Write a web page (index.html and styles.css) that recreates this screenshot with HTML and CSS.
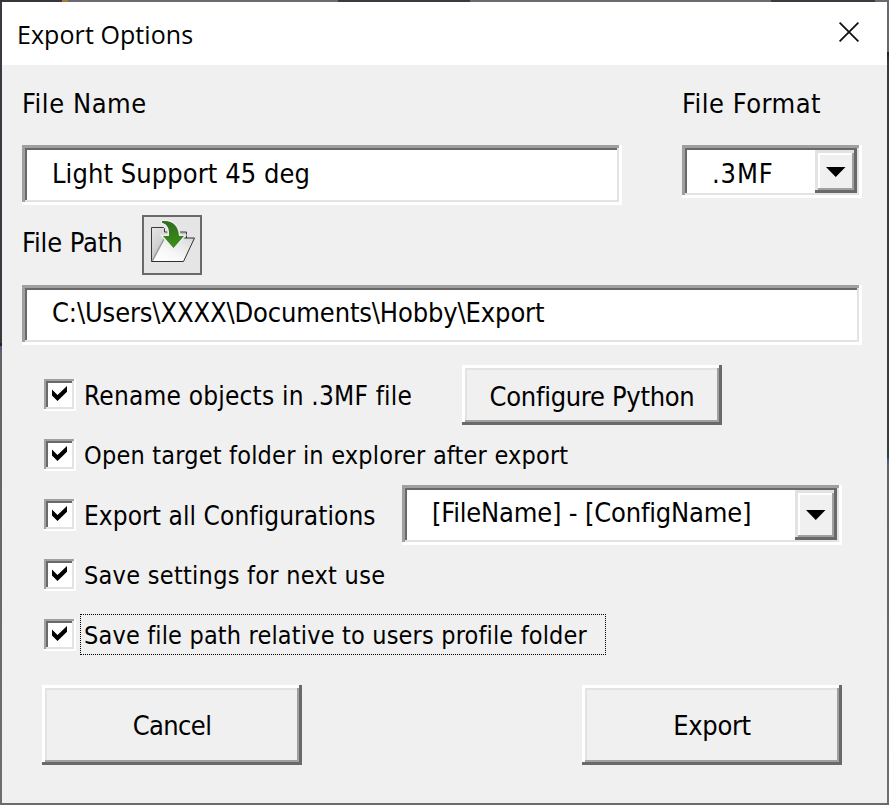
FILE: index.html
```html
<!DOCTYPE html>
<html lang="en">
<head>
<meta charset="utf-8">
<title>Export Options</title>
<link rel="stylesheet" href="styles.css">
</head>
<body>
<svg class="defs" width="0" height="0" aria-hidden="true">
  <symbol id="check" viewBox="0 0 32 32"><path d="M8 10.500 L13.500 16 L23 7 V12.700 L13.500 22 L8 16.500 Z"/></symbol>
  <symbol id="arrow" viewBox="0 0 20 10"><path d="M0 0 H19.5 L9.75 10 Z"/></symbol>
</svg>
<div class="edge edge-top"></div>
<div class="middle">
  <div class="edge edge-left"></div>
  <main class="dialog">
    <header class="titlebar">
      <h1 class="title">Export Options</h1>
      <svg class="close" width="20" height="20" viewBox="0 0 20 20"><path d="M.6 .6 L19.4 19.4 M19.4 .6 L.6 19.4" stroke="#111" stroke-width="1.8" fill="none"/></svg>
    </header>
    <div class="content">
      <div class="names">
        <section class="field name-field">
          <label class="label name-label">File Name</label>
          <div class="sunken input"><span class="value-name">Light Support 45 deg</span></div>
        </section>
        <section class="field format-field">
          <label class="label format-label">File Format</label>
          <div class="sunken select select-format"><span class="value-format">.3MF</span><button class="raised drop"><svg width="20" height="10"><use href="#arrow"/></svg></button></div>
        </section>
      </div>
      <div class="path-row">
        <label class="path-label">File Path</label>
        <button class="browse" aria-label="Browse">
          <svg width="56" height="56" viewBox="0 0 56 56">
            <defs>
              <linearGradient id="back" x1="0" y1="0" x2="1" y2="1"><stop offset="0" stop-color="#e6e6e6"/><stop offset="1" stop-color="#a9a9a9"/></linearGradient>
              <linearGradient id="front" x1="0" y1="1" x2="1" y2="0"><stop offset="0" stop-color="#fff"/><stop offset=".4" stop-color="#f8f8f8"/><stop offset="1" stop-color="#d8d8d8"/></linearGradient>
              <linearGradient id="green" x1="0" y1="0" x2="0" y2="1"><stop offset="0" stop-color="#2f6d20"/><stop offset="1" stop-color="#3b9018"/></linearGradient>
            </defs>
            <path d="M7.5 44.5 V10.5 H19.5 L20.5 11.500 V15 H42.5 V22 L30 35 Z" fill="url(#back)" stroke="#3a3a3a"/>
            <path d="M8 44.5 L20 21 H50.5 L39.5 44.5 Z" fill="url(#front)"/>
            <path d="M8 44.5 L20 22" stroke="#999" stroke-width="1.5"/>
            <path d="M34 21 H50.5 L39.5 44.5 H7.5" fill="none" stroke="#303030"/>
            <path d="M18 4.300 C27 3 34.500 8 35 19 H40 L29.500 31 L19 19 H25 C25.500 12 24 7.500 18 5.700 Z" fill="url(#green)" stroke="#eee" stroke-width="3" paint-order="stroke"/>
          </svg>
        </button>
      </div>
      <div class="sunken input input-path"><span class="value-path">C:\Users\XXXX\Documents\Hobby\Export</span></div>
      <div class="options">
        <div class="option">
          <span class="check"><svg width="32" height="32"><use href="#check"/></svg></span>
          <span class="text text-rename">Rename objects in .3MF file</span>
          <button class="raised configure"><span>Configure Python</span></button>
        </div>
        <div class="option">
          <span class="check"><svg width="32" height="32"><use href="#check"/></svg></span>
          <span class="text text-open">Open target folder in explorer after export</span>
        </div>
        <div class="option">
          <span class="check"><svg width="32" height="32"><use href="#check"/></svg></span>
          <span class="text text-all">Export all Configurations</span>
          <div class="sunken select select-pattern"><span class="value-pattern">[FileName] - [ConfigName]</span><button class="raised drop"><svg width="20" height="10"><use href="#arrow"/></svg></button></div>
        </div>
        <div class="option">
          <span class="check"><svg width="32" height="32"><use href="#check"/></svg></span>
          <span class="text text-settings">Save settings for next use</span>
        </div>
        <div class="option">
          <span class="check"><svg width="32" height="32"><use href="#check"/></svg></span>
          <span class="text text-relative">Save file path relative to users profile folder</span>
        </div>
      </div>
      <footer class="actions">
        <button class="raised action cancel">Cancel</button>
        <button class="raised action export">Export</button>
      </footer>
    </div>
  </main>
  <div class="edge edge-right"></div>
</div>
<div class="edge edge-bottom"></div>
</body>
</html>
```
FILE: styles.css
```css
* { box-sizing: border-box; }
body {
  margin: 0;
  width: 889px;
  height: 805px;
  overflow: hidden;
  display: flex;
  flex-direction: column;
  color: #000;
  font: 27px/40px "DejaVu Sans Condensed", "DejaVu Sans", sans-serif;
  white-space: nowrap;
}
button { border: 0; padding: 0; margin: 0; font: inherit; color: inherit; background: #f0f0f0; }
svg { display: block; flex: none; }
.defs { display: none; }

.edge { flex: none; background: #6b6b6e; }
.edge-top { height: 2px; background: linear-gradient(90deg, #36353b 62px, #a8773a 62px, #a8773a 68px, #6b6970 68px, #6b6970 338px, #3c3a40 338px, #3c3a40 470px, #6b6970 470px, #6b6970 771px, #3c3a40 771px, #3c3a40 875px, #6b6970 875px); }
.edge-bottom { height: 2px; }
.edge-left { width: 2px; background: linear-gradient(#3a3941 341px, #26262b 341px, #26262b 344px, #5c5d65 344px, #4c5d8c 346px, #4c5d8c 348px, #626268 349px, #6e6e6e); }
.edge-right { width: 2px; background: linear-gradient(#6b6970 50px, #222226 50px, #3b3b42 62px, #3b3b42 455px, #4c5d8c 459px, #4c5d8c 461px, #626268 463px, #6e6e6e); }
.middle { display: flex; height: 801px; }
.dialog { width: 885px; background: #f0f0f0; }

.titlebar { display: flex; justify-content: space-between; height: 63px; padding: 0 28px 0 15px; background: #fff; }
.title { margin: 12px 0 0; font: 25px/40px "Open Sans", "Noto Sans", sans-serif; letter-spacing: .07px; }
.close { margin-top: 20px; }

.content { padding: 0 25px 0 20px; }
.sunken { background: #fff; box-shadow: inset -3px -3px #fff, inset 3px 3px #a0a0a0, inset -5px -5px #e3e3e3, inset 5px 5px #696969; }
.raised { background: #f0f0f0; box-shadow: inset -3px -3px #696969, inset 3px 3px #fff, inset -5px -5px #a0a0a0, inset 5px 5px #e3e3e3; }
.names { display: flex; justify-content: space-between; height: 140px; }
.field { padding-top: 19px; }
.name-field { width: 600px; }
.format-field { width: 180px; }
.label { display: block; height: 61px; }
.name-label { letter-spacing: .55px; }
.format-label { letter-spacing: .5px; }
.input { height: 60px; padding: 9px 0 0 30px; }
.input-path { width: 840px; padding-top: 8px; }
.value-name { letter-spacing: .08px; }
.value-path { letter-spacing: -.13px; }
.select { display: flex; justify-content: space-between; padding: 5px; }
.select-format { height: 53px; }
.value-format { padding: 4px 0 0 25px; letter-spacing: .9px; }
.drop { display: flex; align-items: center; justify-content: center; width: 42px; box-shadow: inset -3px -3px #696969, inset 3px 3px #e3e3e3, inset -5px -5px #a0a0a0, inset 5px 5px #fff; }
.select-format .drop svg { margin-top: 1px; }

.path-row { display: flex; height: 80px; padding-top: 10px; }
.path-label { width: 120px; padding-top: 8px; letter-spacing: -.1px; }
.browse { width: 60px; height: 60px; border: 2px solid #696969; background: #e5e5e5; }

.options { height: 310px; padding: 20px 0 0 22px; }
.option { display: flex; height: 60px; }
.check { flex: none; width: 32px; height: 32px; margin-top: 14px; background: #fff; box-shadow: inset -2px -2px #fff, inset 2px 2px #a0a0a0, inset -4px -4px #e3e3e3, inset 4px 4px #696969; }
.text { height: 41px; margin: 9px 0 0 4px; padding: 1px 0 0 3px; border: 1px solid transparent; font-size: 25px; }
.text-rename { width: 382px; font-size: 26px; letter-spacing: .2px; }
.text-open { letter-spacing: .2px; }
.text-all { width: 322px; font-size: 26px; letter-spacing: .08px; }
.text-settings { letter-spacing: .28px; }
.text-relative { width: 526px; border: 1px dotted #000; letter-spacing: .17px; }
.configure { width: 260px; height: 60px; padding-top: 3px; letter-spacing: -.3px; }
.select-pattern { width: 440px; height: 60px; }
.value-pattern { padding: 3px 0 0 25px; letter-spacing: -.18px; }

.actions { display: flex; justify-content: space-between; padding: 30px 20px 0; }
.action { width: 260px; height: 80px; padding-top: 2px; }
.cancel { letter-spacing: -.6px; }
.export { letter-spacing: -.3px; }
```
